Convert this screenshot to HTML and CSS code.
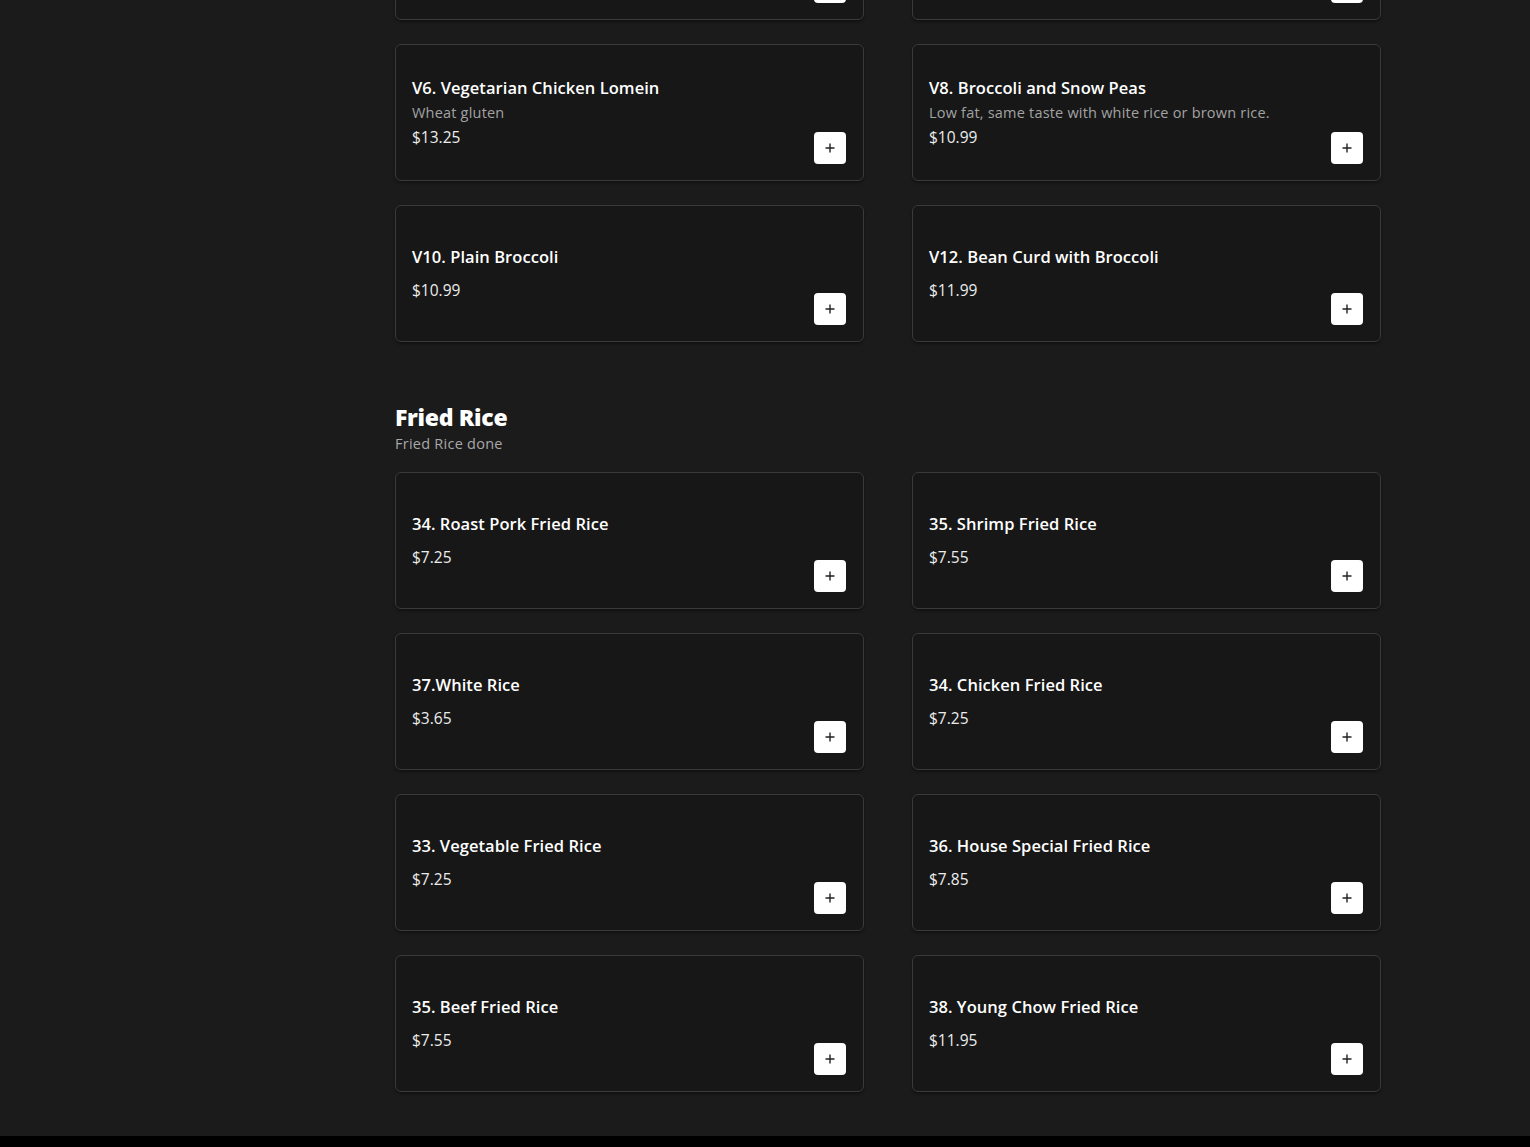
FILE: index.html
```html
<!DOCTYPE html>
<html lang="en">
<head>
<meta charset="utf-8">
<title>Menu</title>
<link rel="stylesheet" href="styles.css">
</head>
<body>
<main class="menu">
  <section class="section section-first">
    <div class="grid">
      <div class="card">
        <div class="info">
          <div class="name nodesc">V2. Mixed Vegetables</div>
          <div class="price">$10.99</div>
        </div>
        <button class="add" aria-label="Add"><svg viewBox="0 0 12 12" width="12" height="12"><path d="M6 1.5v9M1.5 6h9" stroke="#222" stroke-width="1.4" fill="none"/></svg></button>
      </div>
      <div class="card">
        <div class="info">
          <div class="name nodesc">V4. Sautéed String Beans</div>
          <div class="price">$10.99</div>
        </div>
        <button class="add" aria-label="Add"><svg viewBox="0 0 12 12" width="12" height="12"><path d="M6 1.5v9M1.5 6h9" stroke="#222" stroke-width="1.4" fill="none"/></svg></button>
      </div>
      <div class="card">
        <div class="info">
          <div class="name">V6. Vegetarian Chicken Lomein</div>
          <div class="desc">Wheat gluten</div>
          <div class="price">$13.25</div>
        </div>
        <button class="add" aria-label="Add"><svg viewBox="0 0 12 12" width="12" height="12"><path d="M6 1.5v9M1.5 6h9" stroke="#222" stroke-width="1.4" fill="none"/></svg></button>
      </div>
      <div class="card">
        <div class="info">
          <div class="name">V8. Broccoli and Snow Peas</div>
          <div class="desc">Low fat, same taste with white rice or brown rice.</div>
          <div class="price">$10.99</div>
        </div>
        <button class="add" aria-label="Add"><svg viewBox="0 0 12 12" width="12" height="12"><path d="M6 1.5v9M1.5 6h9" stroke="#222" stroke-width="1.4" fill="none"/></svg></button>
      </div>
      <div class="card">
        <div class="info">
          <div class="name nodesc">V10. Plain Broccoli</div>
          <div class="price">$10.99</div>
        </div>
        <button class="add" aria-label="Add"><svg viewBox="0 0 12 12" width="12" height="12"><path d="M6 1.5v9M1.5 6h9" stroke="#222" stroke-width="1.4" fill="none"/></svg></button>
      </div>
      <div class="card">
        <div class="info">
          <div class="name nodesc">V12. Bean Curd with Broccoli</div>
          <div class="price">$11.99</div>
        </div>
        <button class="add" aria-label="Add"><svg viewBox="0 0 12 12" width="12" height="12"><path d="M6 1.5v9M1.5 6h9" stroke="#222" stroke-width="1.4" fill="none"/></svg></button>
      </div>
    </div>
  </section>

  <section class="section">
    <h2 class="section-title">Fried Rice</h2>
    <p class="section-desc">Fried Rice done</p>
    <div class="grid">
      <div class="card">
        <div class="info">
          <div class="name nodesc">34. Roast Pork Fried Rice</div>
          <div class="price">$7.25</div>
        </div>
        <button class="add" aria-label="Add"><svg viewBox="0 0 12 12" width="12" height="12"><path d="M6 1.5v9M1.5 6h9" stroke="#222" stroke-width="1.4" fill="none"/></svg></button>
      </div>
      <div class="card">
        <div class="info">
          <div class="name nodesc">35. Shrimp Fried Rice</div>
          <div class="price">$7.55</div>
        </div>
        <button class="add" aria-label="Add"><svg viewBox="0 0 12 12" width="12" height="12"><path d="M6 1.5v9M1.5 6h9" stroke="#222" stroke-width="1.4" fill="none"/></svg></button>
      </div>
      <div class="card">
        <div class="info">
          <div class="name nodesc">37.White Rice</div>
          <div class="price">$3.65</div>
        </div>
        <button class="add" aria-label="Add"><svg viewBox="0 0 12 12" width="12" height="12"><path d="M6 1.5v9M1.5 6h9" stroke="#222" stroke-width="1.4" fill="none"/></svg></button>
      </div>
      <div class="card">
        <div class="info">
          <div class="name nodesc">34. Chicken Fried Rice</div>
          <div class="price">$7.25</div>
        </div>
        <button class="add" aria-label="Add"><svg viewBox="0 0 12 12" width="12" height="12"><path d="M6 1.5v9M1.5 6h9" stroke="#222" stroke-width="1.4" fill="none"/></svg></button>
      </div>
      <div class="card">
        <div class="info">
          <div class="name nodesc">33. Vegetable Fried Rice</div>
          <div class="price">$7.25</div>
        </div>
        <button class="add" aria-label="Add"><svg viewBox="0 0 12 12" width="12" height="12"><path d="M6 1.5v9M1.5 6h9" stroke="#222" stroke-width="1.4" fill="none"/></svg></button>
      </div>
      <div class="card">
        <div class="info">
          <div class="name nodesc">36. House Special Fried Rice</div>
          <div class="price">$7.85</div>
        </div>
        <button class="add" aria-label="Add"><svg viewBox="0 0 12 12" width="12" height="12"><path d="M6 1.5v9M1.5 6h9" stroke="#222" stroke-width="1.4" fill="none"/></svg></button>
      </div>
      <div class="card">
        <div class="info">
          <div class="name nodesc">35. Beef Fried Rice</div>
          <div class="price">$7.55</div>
        </div>
        <button class="add" aria-label="Add"><svg viewBox="0 0 12 12" width="12" height="12"><path d="M6 1.5v9M1.5 6h9" stroke="#222" stroke-width="1.4" fill="none"/></svg></button>
      </div>
      <div class="card">
        <div class="info">
          <div class="name nodesc">38. Young Chow Fried Rice</div>
          <div class="price">$11.95</div>
        </div>
        <button class="add" aria-label="Add"><svg viewBox="0 0 12 12" width="12" height="12"><path d="M6 1.5v9M1.5 6h9" stroke="#222" stroke-width="1.4" fill="none"/></svg></button>
      </div>
    </div>
  </section>
</main>
<footer class="footer"></footer>
</body>
</html>
```

FILE: styles.css
```css
* { box-sizing: border-box; }

html, body {
  margin: 0;
  padding: 0;
}

body {
  background: #1b1b1b;
  font-family: "Open Sans", "Noto Sans", "Liberation Sans", sans-serif;
  color: #fff;
  overflow: hidden;
}

.menu {
  width: 986px;
  margin-left: 395px;
  padding-bottom: 44px;
}

.section-first {
  margin-top: -117px;
}

.section + .section {
  margin-top: 60px;
}

.section-title {
  margin: 0;
  font-size: 23px;
  line-height: 30px;
  font-weight: 800;
  color: #fff;
  letter-spacing: -0.3px;
}

.section-desc {
  margin: 2px 0 18px;
  font-size: 14.5px;
  line-height: 20px;
  letter-spacing: 0.25px;
  color: #a8a8a8;
  font-weight: 400;
}

.grid {
  display: grid;
  grid-template-columns: 1fr 1fr;
  column-gap: 48px;
  row-gap: 24px;
}

.card {
  height: 137px;
  background: #171717;
  border: 1px solid #3a3a3a;
  border-radius: 6px;
  padding: 16px 17px 16px 16px;
  display: flex;
  align-items: center;
  box-shadow: 0 2px 3px rgba(0,0,0,0.35);
}

.info {
  flex: 1;
  min-width: 0;
}

.name {
  font-size: 16.5px;
  line-height: 25px;
  font-weight: 600;
  color: #fff;
  letter-spacing: 0.05px;
}

.name.nodesc {
  margin-bottom: 9px;
}

.desc {
  font-size: 14.5px;
  line-height: 25px;
  letter-spacing: 0.2px;
  color: #a3a3a3;
  font-weight: 400;
}

.price {
  font-size: 15.5px;
  line-height: 25px;
  color: #ececec;
  font-weight: 400;
}

.add {
  align-self: flex-end;
  width: 32px;
  height: 32px;
  border: none;
  border-radius: 4px;
  background: #fff;
  display: flex;
  align-items: center;
  justify-content: center;
  padding: 0;
  flex-shrink: 0;
}

.footer {
  height: 11px;
  background: #000;
}
```
